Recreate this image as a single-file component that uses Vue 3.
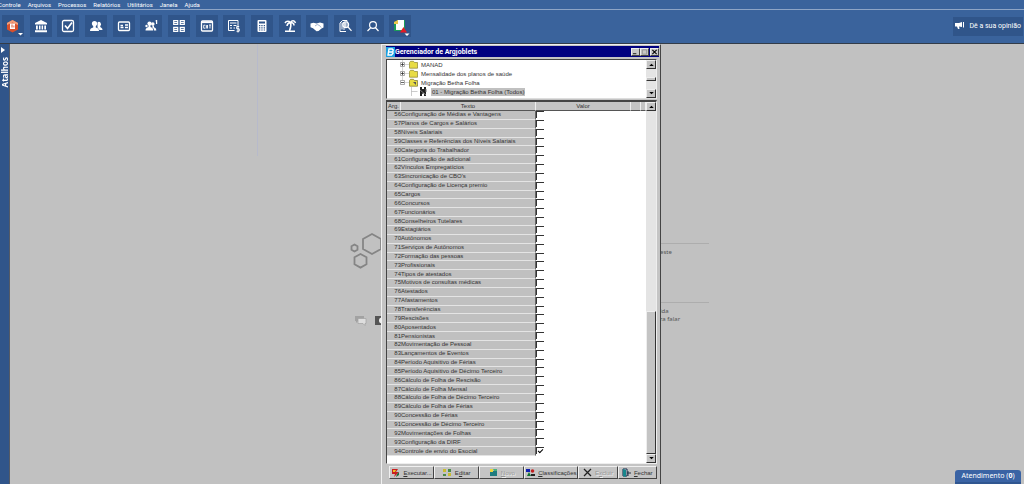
<script setup>
import { ref } from 'vue'

const menus = ['Controle', 'Arquivos', 'Processos', 'Relatórios', 'Utilitários', 'Janela', 'Ajuda']
const tools = [
  'Módulo', 'Entidade', 'Tarefas', 'Pessoas', 'Cadastro', 'Dependentes', 'Eventos', 'Texto',
  'Folha', 'Cálculo', 'Férias', 'Acordo', 'Auditoria', 'Pesquisa', 'Avisos'
]
const labels = [
  'Configuração de Médias e Vantagens', 'Planos de Cargos e Salários', 'Níveis Salariais',
  'Classes e Referências dos Níveis Salariais', 'Categoria do Trabalhador', 'Configuração de adicional',
  'Vínculos Empregatícios', "Sincronicação de CBO's", 'Configuração de Licença premio', 'Cargos',
  'Concursos', 'Funcionários', 'Conselheiros Tutelares', 'Estagiários', 'Autônomos',
  'Serviços de Autônomos', 'Formação das pessoas', 'Profissionais', 'Tipos de atestados',
  'Motivos de consultas médicas', 'Atestados', 'Afastamentos', 'Transferências', 'Rescisões',
  'Aposentados', 'Pensionistas', 'Movimentação de Pessoal', 'Lançamentos de Eventos',
  'Período Aquisitivo de Férias', 'Período Aquisitivo de Décimo Terceiro', 'Cálculo de Folha de Rescisão',
  'Cálculo de Folha Mensal', 'Cálculo de Folha de Décimo Terceiro', 'Cálculo de Folha de Férias',
  'Concessão de Férias', 'Concessão de Décimo Terceiro', 'Movimentações de Folhas',
  'Configuração da DIRF', 'Controle de envio do Esocial'
]
const rows = ref(labels.map((text, i) => ({ arg: 56 + i, text, on: 56 + i === 94 })))
</script>

<template>
  <div class="app">
    <nav class="menubar">
      <a v-for="m in menus" :key="m" href="#">{{ m }}</a>
    </nav>

    <header class="toolbar">
      <div class="tools">
        <button v-for="(t, i) in tools" :key="t" type="button" class="tool" :aria-label="t">
          <svg viewBox="0 0 22 22" fill="none" stroke="#fff" stroke-width="1.3">
            <g v-if="i === 0" stroke="none">
              <path d="M10.500 5l5.500 3v6.500l-5.500 3-5.500-3V8z" fill="#d8502c" />
              <path d="M10.500 5l5.500 3v2l-5.500-2.500L5 10V8z" fill="#efa07c" />
              <path d="M8 8.500h5v5.500H8z" fill="#fff" />
              <path d="M9.500 9.500h1v3h-1zm2 1h.8v2h-.8z" fill="#d8502c" />
              <path d="M16 18h5l-2.500 2.500z" fill="#fff" />
            </g>
            <g v-else-if="i === 1" fill="#fff" stroke="none">
              <path d="M11 5l6 3v1.500H5V8zM6 10.500h1.800v4H6zM9 10.500h1.500v4H9zM11.600 10.500h1.500v4h-1.500zM14.300 10.500H16v4h-1.700zM5 15.200h12v2H5z" />
            </g>
            <g v-else-if="i === 2">
              <rect x="5.500" y="5.500" width="11" height="11" rx="1.500" />
              <path d="M8 10.500l2.500 3 4.500-6" stroke-width="1.700" />
            </g>
            <g v-else-if="i === 3" fill="#fff" stroke="none">
              <path d="M12.500 7.500a2.100 2.300 0 1 1 2.700 3.700c0 1.600 2.300 1.200 2.300 3.800h-3l-2-2.500z" />
              <circle cx="9.500" cy="8.500" r="2.600" />
              <path d="M8.200 10h2.600v2.500c2 .8 3.200 1 3.200 3.500H5c0-2.500 1.200-2.700 3.200-3.500z" />
            </g>
            <g v-else-if="i === 4">
              <rect x="5.500" y="7" width="11" height="8.500" rx="1" />
              <path d="M7.500 10.500h2.500M7.500 12.500h3M12 10h3M12 12.500h3" />
            </g>
            <g v-else-if="i === 5" fill="#fff" stroke="none">
              <circle cx="9.500" cy="8.500" r="2.100" /><circle cx="12.800" cy="9" r="1.800" />
              <path d="M8.500 10h2v2c1.600.6 2.700 1 2.700 3.500H5.500c0-2.300 1.400-2.700 3-3.500zM12.500 10.500h1.500v1.700c1.400.5 2.300 1 2.300 3.300h-2.300c0-1.700-.7-2.500-1.700-3z" />
              <circle cx="6.500" cy="11" r="1.200" /><path d="M15.200 6l1-1h1v4h-1.200V6.500z" />
            </g>
            <g v-else-if="i === 6">
              <path d="M5.700 5.700h4v3.800h-4zM12.300 5.700h4v3.800h-4zM5.700 12.300h4v4h-4zM12.300 12.300h4v4h-4zM6 7.600h3.500M12.500 7.600H16M6 14.300h3.500M12.500 14.300H16" stroke-width="1.200" />
            </g>
            <g v-else-if="i === 7">
              <rect x="5.500" y="6" width="11" height="10" rx="1" />
              <path d="M5.500 7.200h11" stroke-width="1.800" />
              <path d="M9.300 10.200H7.700v3h1.600M10.300 10v3.500M11.500 10v3.500M10.300 11.800h1.200M13 10h2M14 10v3.500" stroke-width=".9" />
            </g>
            <g v-else-if="i === 8" stroke-width="1">
              <path d="M11.500 15.500h-6v-10h9.500v5M7 8h6.500M7 10.500h2M10.500 10.500h3M7 13h2M10.500 13h1.500" />
              <path d="M16.200 11.500h-2.500v2.300h2.500v2.400h-2.700M15 10.500v7" />
            </g>
            <g v-else-if="i === 9" stroke="none">
              <rect x="6.500" y="5" width="9" height="12" rx="1" fill="#fff" />
              <path d="M8 6.500h6v2H8zM8 10h1.300v1.200H8zm2.300 0h1.300v1.200h-1.300zm2.400 0H14v1.200h-1.300zM8 12.200h1.300v1.200H8zm2.300 0h1.300v1.200h-1.300zm2.400 0H14v1.200h-1.300zM8 14.400h1.300v1.200H8zm2.300 0h1.300v1.200h-1.300zm2.400 0H14v1.200h-1.300z" fill="#30558a" />
            </g>
            <g v-else-if="i === 10">
              <path d="M6 8c1.500-2.500 4-2 5.500-.5C13 5 15.500 5 16.500 8M8 11c.2-2 1.500-3.200 3.500-3.500 2 0 3.500 1 3.500 3M11.500 7.500c.8 2.500.5 5-1 8M6 16.300h10" stroke-width="1.500" />
            </g>
            <g v-else-if="i === 11" stroke="none" fill="#fff">
              <path d="M4.500 8.500l3-.8 3 .8 3.500-1 3.500 1v4l-2 1-3 2.500-2 .3-3.500-3-2.500-1z" />
              <path d="M9 11l2.200-1.500 2.300 1 1.600 2" fill="none" stroke="#8ba0c0" stroke-width=".8" />
            </g>
            <g v-else-if="i === 12" stroke-width="1">
              <path d="M12 16.500H6V8l2.500-2.500H13V7M8 7.500v7M10 13v2" />
              <circle cx="11.700" cy="9.800" r="2.900" stroke-width="1.200" />
              <path d="M9 9h5M9 11h5M11 7v5M14 12l3.500 3.800" stroke-width="1.200" />
            </g>
            <g v-else-if="i === 13" stroke-width="1.200">
              <circle cx="11" cy="10" r="3.400" />
              <path d="M13.300 12.500l3.200 3.500M8.500 13l-3 3" />
            </g>
            <g v-else stroke="none">
              <path d="M5 7l4-2h7v11H5z" fill="#1c9b5a" />
              <path d="M8 6l1-1h6v9l-2 1H7V9z" fill="#fff" />
              <path d="M5 7l4-2v4H5z" fill="#eec74d" />
              <path d="M14.500 12l3.500 5.500h-7z" fill="#e31b23" />
              <path d="M15.500 18.500h5L18 21z" fill="#fff" />
            </g>
          </svg>
        </button>
      </div>
      <button type="button" class="opinion">
        <svg viewBox="0 0 10 8"><path d="M0 1h4l3-1v5L4 4.500 4.500 7H3L2 4.500H0zM8 0h1v5.500H8z" fill="#fff" /></svg>
        <span>Dê a sua opinião</span>
      </button>
    </header>

    <div class="work">
      <aside class="shortcuts">
        <svg viewBox="0 0 4 6"><path d="M0 0l4 3-4 3z" fill="#fff" /></svg>
        <span>Atalhos</span>
      </aside>

      <main class="desktop">
        <i class="seam"></i>
        <svg class="hexes" viewBox="0 0 32 38" fill="none" stroke="#858585" stroke-width="1.800">
          <path d="M22 2l9 5v10l-9 5-9-5V7zM4.500 12.500l3 1.700v3.600l-3 1.700-3-1.700v-3.600zM10.500 22l6 3.300v7l-6 3.300-6-3.300v-7z" />
        </svg>
        <svg class="chat" viewBox="0 0 28 12">
          <path d="M1 1h9v5H4L2 8V6H1z" fill="#a2a2a2" /><path d="M4 3.500h8v5h-1v2L9 8.500H4z" fill="#dedede" stroke="#a0a0a0" stroke-width=".7" />
          <path d="M21 1h7v9h-7z" fill="#555" /><path d="M28 2.500a3 3 0 0 0 0 6z" fill="#eee" />
        </svg>
        <div class="note first">este</div>
        <div class="note second">ida<br />ra falar</div>

        <section class="window" aria-label="Gerenciador de Argjoblets">
          <div class="title">
            <svg viewBox="0 0 9 10"><path d="M0 0h9v10H0z" fill="#1ba0e0" /><path d="M3 2h3.200l1 1-.5 1.700.3 1.500L5.500 8H2zM2.500 5H6" fill="none" stroke="#fff" stroke-width="1.400" /></svg>
            <h1>Gerenciador de Argjoblets</h1>
            <button type="button" class="sys" aria-label="Minimizar"><svg viewBox="0 0 8 7"><path d="M1 5.500h4" stroke="#000" /></svg></button>
            <button type="button" class="sys" aria-label="Maximizar"><svg viewBox="0 0 8 7"><path d="M1.500 1h5v5h-5z" fill="none" stroke="#909090" /></svg></button>
            <button type="button" class="sys close" aria-label="Fechar janela"><svg viewBox="0 0 8 7"><path d="M1.500 1l5 5M6.500 1l-5 5" stroke="#000" stroke-width="1.200" /></svg></button>
          </div>

          <div class="tree">
            <ul>
              <li><svg class="node" viewBox="0 0 22 9"><path d="M2.500 0v9M5 4.500h4" stroke="#bbb" stroke-width=".6" /><path d="M.5 2.500h4v4h-4z" fill="#fff" stroke="#888" stroke-width=".7" /><path d="M1 4.500h3M2.500 3v3" stroke="#222" stroke-width=".7" /><path d="M9.500 2.500l1-1.200h3l1 1.200h3v5.700h-8z" fill="#e8dc45" stroke="#8a8430" stroke-width=".7" /></svg>MANAD</li>
              <li><svg class="node" viewBox="0 0 22 9"><path d="M2.500 0v9M5 4.500h4" stroke="#bbb" stroke-width=".6" /><path d="M.5 2.500h4v4h-4z" fill="#fff" stroke="#888" stroke-width=".7" /><path d="M1 4.500h3M2.500 3v3" stroke="#222" stroke-width=".7" /><path d="M9.500 2.500l1-1.200h3l1 1.200h3v5.700h-8z" fill="#e8dc45" stroke="#8a8430" stroke-width=".7" /></svg>Mensalidade dos planos de saúde</li>
              <li><svg class="node" viewBox="0 0 22 9"><path d="M2.500 0v3M5 4.500h4" stroke="#bbb" stroke-width=".6" /><path d="M.5 2.500h4v4h-4z" fill="#fff" stroke="#888" stroke-width=".7" /><path d="M1 4.500h3" stroke="#222" stroke-width=".7" /><path d="M9.500 2.500l1-1.200h3l1 1.200h3v5.700h-8z" fill="#e8dc45" stroke="#77732c" stroke-width=".7" /><path d="M13 4l3 3V4z" fill="#555" /></svg>Migração Betha Folha</li>
              <li class="leaf"><svg class="node" viewBox="0 0 22 9"><path d="M2.500 0v9M2.500 4.500h6" stroke="#aaa" stroke-width=".6" /><path d="M11 0h2v2h2V0h2v9h-2V6l-2 1v2h-2z" fill="#222" /><path d="M11 3l6 5M17 2v3" stroke="#777" /></svg><mark>01 - Migração Betha Folha (Todos)</mark></li>
            </ul>
            <div class="scroll">
              <button type="button" aria-label="Subir árvore"><svg viewBox="0 0 6 4"><path d="M0 4l3-3 3 3z" /></svg></button>
              <i class="thumb small"></i>
              <button type="button" aria-label="Descer árvore"><svg viewBox="0 0 6 4"><path d="M0 0h6L3 3z" /></svg></button>
            </div>
          </div>

          <div class="list">
            <table>
              <colgroup><col class="c-arg" /><col class="c-text" /><col /><col class="c-a" /><col class="c-b" /></colgroup>
              <thead><tr><th>Arg.</th><th>Texto</th><th>Valor</th><th></th><th></th></tr></thead>
              <tbody>
                <tr v-for="r in rows" :key="r.arg">
                  <td class="arg">{{ r.arg }}</td>
                  <td class="text"><label :for="'arg' + r.arg">{{ r.text }}</label></td>
                  <td class="val" colspan="3"><input :id="'arg' + r.arg" v-model="r.on" type="checkbox" /></td>
                </tr>
              </tbody>
            </table>
            <div class="scroll">
              <button type="button" aria-label="Subir lista"><svg viewBox="0 0 6 4"><path d="M0 4l3-3 3 3z" /></svg></button>
              <i class="thumb big"></i>
              <button type="button" aria-label="Descer lista"><svg viewBox="0 0 6 4"><path d="M0 0h6L3 3z" /></svg></button>
            </div>
          </div>

          <div class="actions">
            <button type="button"><svg viewBox="0 0 9 9"><path d="M1 1h6L5 4h3L3 9l1-3H1z" fill="#c82020" /><path d="M2 2h3L4 4H2z" fill="#f0c020" /><path d="M6 6l2-2v3L5 9z" fill="#207040" /></svg><span><u>E</u>xecutar...</span></button>
            <button type="button"><svg viewBox="0 0 9 9"><path d="M0 1h3v3H0zM5 5h3v3H5z" fill="#c9bd30" /><path d="M5 1h3v3H5zM0 6h3v2H0z" fill="#4b8a4b" /></svg><span>E<u>d</u>itar</span></button>
            <button type="button" disabled><svg viewBox="0 0 9 9"><path d="M1 3h7v5H1z" fill="#207c80" /><path d="M1 1h3v3H1z" fill="#ecd540" /><path d="M4 1h4v2H5z" fill="#4aaf80" /></svg><span><u>N</u>ovo</span></button>
            <button type="button" class="wide"><svg viewBox="0 0 9 9"><path d="M0 1h4v3H0z" fill="#1020b0" /><circle cx="6.500" cy="3" r="1.800" fill="#c02020" /><path d="M1 8l2-4 2 4z" fill="#107030" /><path d="M5 6h4v2H5z" fill="#222" /></svg><span><u>C</u>lassificações</span></button>
            <button type="button" class="slim" disabled><svg viewBox="0 0 9 9"><path d="M1 1l7 7M8 1L1 8" stroke="#222" stroke-width="1.300" /></svg><span>E<u>x</u>cluir</span></button>
            <button type="button" class="slim"><svg viewBox="0 0 9 9"><path d="M1 1h4v7H1z" fill="#fff" stroke="#124" /><path d="M1 1l3 1v7L1 8z" fill="#17868c" /><path d="M6 3v5M5 5h4" stroke="#234" /></svg><span><u>F</u>echar</span></button>
          </div>
        </section>

        <button type="button" class="support">Atendimento (<b>0</b>)</button>
      </main>
    </div>
  </div>
</template>

<style>
html, body { height: 100%; overflow: hidden; }
#app { height: 100%; }
</style>

<style scoped>
* { box-sizing: border-box; }
button { margin: 0; padding: 0; border: 0; font: inherit; color: inherit; }
svg { display: block; flex: none; }
.app { height: 100%; display: flex; flex-direction: column; font-family: "Liberation Sans", Arial, sans-serif; background: #c1c1c1; }
.menubar { height: 10px; flex: none; display: flex; gap: 7px; background: #3a639c; border-bottom: 1px solid #8ea5c6; font: 6px/10px Roboto, sans-serif; }
.menubar a { color: #fff; text-decoration: none; }
.menubar a:first-child { margin-left: -2px; }
.toolbar { height: 34px; flex: none; display: flex; justify-content: space-between; align-items: center; padding: 0 1px 1px 2px; background: #3a639c; border-bottom: 1px solid #333c48; }
.tools { width: 415px; display: grid; grid-template-columns: repeat(15, 1fr); }
.tool { width: 22px; height: 22px; background: #30558a; }
.tool svg { width: 22px; height: 22px; }
.opinion { display: flex; align-items: center; gap: 4px; height: 19px; padding: 0 2px; background: #30558a; color: #fff; font: 7px/10px Roboto, sans-serif; }
.opinion svg { width: 10px; height: 8px; }
.work { flex: 1; min-height: 0; display: flex; }
.shortcuts { width: 10px; flex: none; display: flex; flex-direction: column; gap: 4px; padding-top: 3px; background: #30558a; border-right: 1px solid #555b66; color: #fff; }
.shortcuts svg { width: 4px; height: 6px; margin-left: 1px; }
.shortcuts span { writing-mode: vertical-rl; transform: rotate(180deg); font: bold 8px/9px "Noto Sans", sans-serif; }
.desktop { flex: 1; position: relative; overflow: hidden; background: #c1c1c1; }
.seam { position: absolute; left: 247px; top: 0; width: 1px; height: 112px; background: #b7bacb; }
.hexes { position: absolute; left: 340px; top: 188px; width: 32px; height: 38px; }
.chat { position: absolute; left: 344px; top: 271px; width: 28px; height: 12px; }
.note { position: absolute; left: 650px; width: 49px; border-top: 1px solid #adadad; padding-top: 4px; color: #555; font: 6px/8px "Noto Sans", sans-serif; }
.first { top: 199px; }
.second { top: 258px; }
.window { position: absolute; left: 371px; top: 0; bottom: 0; width: 280px; display: flex; flex-direction: column; gap: 1px; padding: 1px 3px 5px 4px; background: #c4c4c4; border: 1px solid #f0f0f0; border-right: 1px solid #444; border-bottom: 0; color: #333; font: 6px/8px "Liberation Sans", Arial, sans-serif; }
.title { height: 11px; margin-right: -2px; flex: none; display: flex; align-items: center; background: #000080; color: #fff; }
.title > svg { width: 9px; height: 10px; }
h1 { flex: 1; margin: 0; font: bold 7px/10px Roboto, sans-serif; }
.sys { width: 9px; height: 8px; background: #c6c6c6; border: 1px solid #eee; border-right-color: #444; border-bottom-color: #444; }
.sys svg { width: 7px; height: 6px; }
.sys.close { margin-left: 1px; }
.tree { height: 40px; margin-top: 1px; flex: none; display: flex; background: #fff; border: 1px solid #444; border-right-color: #eee; border-bottom-color: #ddd; overflow: hidden; }
.tree ul { flex: 1; margin: 0; padding: 0 0 0 13px; list-style: none; }
.tree li { display: flex; align-items: center; height: 9px; white-space: nowrap; }
.node { width: 22px; height: 9px; margin-right: -1px; }
.tree .leaf { padding-left: 9px; }
.leaf .node { margin-right: 0; }
mark { background: #c0c0c0; color: #333; padding: 0 1px; }
.scroll { width: 10px; flex: none; display: flex; flex-direction: column; justify-content: space-between; background: #e4e4e4; }
.scroll button { height: 9px; display: grid; place-items: center; }
.scroll button svg { width: 5px; height: 3px; }
.scroll button, .thumb { background: #c4c4c4; border: 1px solid #eee; border-right-color: #333; border-bottom-color: #333; }
.small { height: 4px; }
.big { height: 143px; margin-top: auto; }
.list { flex: 1; min-height: 0; margin-bottom: 1px; display: flex; align-items: flex-start; background: #fff; border: 2px solid #444; border-width: 2px 1px 1px 1px; border-right-color: #eee; border-bottom-color: #eee; }
.list .scroll { align-self: stretch; }
table { flex: 1; height: 354px; border-collapse: separate; border-spacing: 0; table-layout: fixed; }
.c-arg { width: 14px; }
.c-text { width: 135px; }
.c-a { width: 10px; }
.c-b { width: 5px; }
th { height: 9px; padding: 0; background: #c4c4c4; font-weight: normal; line-height: 7px; border-right: 1px solid #eee; border-bottom: 1px solid #555; }
td { padding: 0; line-height: 7px; white-space: nowrap; }
.arg, .text { background: #c0c0c0; border-bottom: 1px solid #e4e4e4; }
.arg { text-align: right; }
.text { border-right: 1px solid #666; }
.text label { display: block; }
.val { vertical-align: top; }
.val input { appearance: none; display: block; width: 8px; height: 7px; margin: 0; background: #fff; border: 1px solid #333; border-right: 0; border-bottom: 0; position: relative; }
.val input:checked::after { content: ""; position: absolute; left: 1px; top: 1px; width: 4px; height: 2px; border-left: 1px solid #000; border-bottom: 1px solid #000; transform: rotate(-45deg); }
.actions { flex: none; display: flex; padding-left: 3px; height: 13px; }
.actions button { flex: 45 1 0; min-width: 0; display: flex; align-items: center; justify-content: center; gap: 3px; background: #c4c4c4; border: 1px solid #f0f0f0; border-right-color: #444; border-bottom-color: #444; white-space: nowrap; }
.actions .wide { flex-grow: 54; }
.actions .slim { flex-grow: 39; }
.actions svg { width: 9px; height: 9px; }
.actions :disabled { color: #969696; text-shadow: 1px 1px #eee; }
.support { position: absolute; right: 3px; bottom: 0; width: 66px; height: 14px; background: #3a63a4; color: #fff; border-radius: 3px 3px 0 0; border-bottom: 2px solid #305690; font: 7px/12px "Noto Sans", sans-serif; }
</style>
